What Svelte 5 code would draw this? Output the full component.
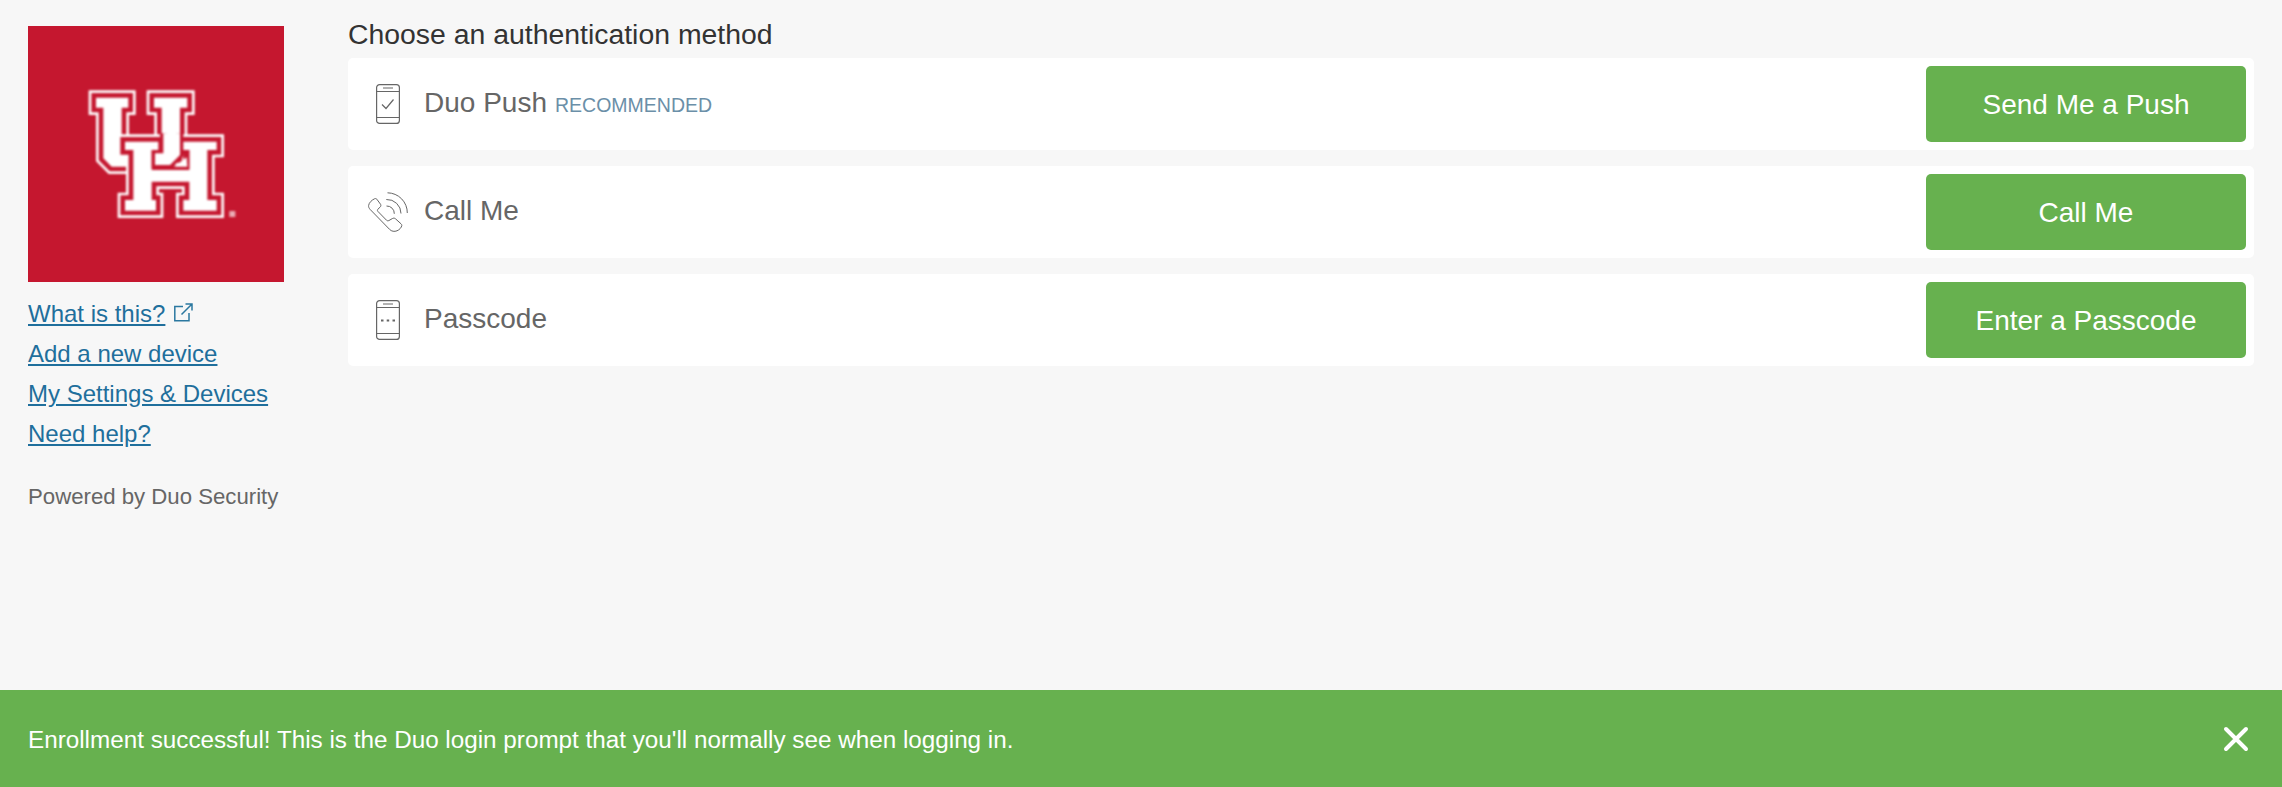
<script lang="ts">
    const methods = [
        { name: 'Duo Push', icon: 'push', note: 'RECOMMENDED', action: 'Send Me a Push' },
        { name: 'Call Me', icon: 'call', note: '', action: 'Call Me' },
        { name: 'Passcode', icon: 'code', note: '', action: 'Enter a Passcode' }
    ];

    const links = ['What is this?', 'Add a new device', 'My Settings & Devices', 'Need help?'];

    const uShape = '78,83 175,83 175,113 155,113 155,250 275,250 275,113 252,113 252,83 352,83 352,113 330,113 330,260 300,290 125,290 100,265 100,113 78,113';
    const uFront = '280,190 280,250 255,250 255,285 300,285 330,255 330,190';
    const hShape = '165,215 265,215 265,240 245,240 245,300 358,300 358,240 338,240 338,215 440,215 440,240 412,240 412,390 440,390 440,422 340,422 340,390 358,390 358,335 245,335 245,390 258,390 258,422 165,422 165,390 190,390 190,240 165,240';
</script>

<div class="page">
    <main class="main">
        <aside class="side">
            <svg class="logo" viewBox="-126 -132 768 768" aria-label="UH logo">
                <rect x="-126" y="-132" width="768" height="768" fill="#c5172f" />
                <g class="mark" stroke-linejoin="miter" paint-order="stroke">
                    <polygon points={uShape} fill="#fff" stroke="#fff" stroke-width="44" />
                    <polygon points={uShape} fill="#fff" stroke="#c5172f" stroke-width="28" />
                    <polygon points={hShape} fill="#fff" stroke="#fff" stroke-width="44" />
                    <polygon points={hShape} fill="#fff" stroke="#c5172f" stroke-width="28" />
                    <polyline points={uFront} fill="#fff" stroke="#c5172f" stroke-width="20" />
                    <rect x="340" y="240" width="18" height="58" fill="#c5172f" />
                    <polygon points="312,290 350,262 352,290" fill="#fff" />
                    <rect x="478" y="423" width="18" height="18" fill="#fff" opacity="0.65" />
                </g>
            </svg>

            <ul class="links">
                {#each links as link, i}
                    <li>
                        <a href="#top">{link}</a>
                        {#if i === 0}
                            <svg class="ext" viewBox="0 0 19 19" fill="none" stroke="currentColor" stroke-width="1.5">
                                <path d="M9 3.500H.8V17.800H15V10" />
                                <path d="M7.500 11.500L17.500 1.500M11.500 1H18V7.500" />
                            </svg>
                        {/if}
                    </li>
                {/each}
            </ul>
            <p class="powered">Powered by Duo Security</p>
        </aside>

        <section class="content">
            <h1>Choose an authentication method</h1>
            <div class="rows">
                {#each methods as m}
                    <div class="row">
                        <div class="label">
                            <span class="icon">
                                {#if m.icon === 'call'}
                                    <svg width="40" height="40" viewBox="0 0 40 40" fill="none" stroke="#666" stroke-width="1">
                                        <path d="M6.500 6.800C4 8 1 10.500 .6 13.500C.4 15 1 16 2 17.300L21.500 37.300C23.500 39.500 26.500 39.800 29 38.800C31.500 37.800 33.500 35.500 33.800 33.500C33.900 32.800 33.500 32.300 33 31.800L27.500 26.800C26.500 25.900 25.300 26 24.300 26.600L20.800 28.600C20 29 19.300 28.900 18.600 28.300L9.800 19.300C9.300 18.700 9.300 18 9.800 17.300L12.400 14.800C13 14 13 13 12.500 12.200L8.800 7.200C8.200 6.500 7.300 6.400 6.500 6.800Z" />
                                        <path d="M19.500 .8A20 20 0 0 1 39.300 21" />
                                        <path d="M18.300 7.500A14 14 0 0 1 33 21.500" />
                                        <path d="M18.500 14A7.500 7.500 0 0 1 26.300 21.800" />
                                    </svg>
                                {:else}
                                    <svg width="24" height="40" viewBox="0 0 24 40" fill="none" stroke="#666" stroke-width="1.2">
                                        <rect x=".6" y=".6" width="22.800" height="38.800" rx="3" />
                                        <path d="M.6 7.500H23.400M.6 33.500H23.400M7 4H17" />
                                        {#if m.icon === 'push'}
                                            <path d="M6 20.500L10 24.500L17.500 15.500" />
                                        {:else}
                                            <path d="M5 20.500H7.500M10.700 20.500H13.200M16.500 20.500H19" stroke-width="2" />
                                        {/if}
                                    </svg>
                                {/if}
                            </span>
                            <span class="name">{m.name}</span>
                            {#if m.note}
                                <span class="note">{m.note}</span>
                            {/if}
                        </div>
                        <button class="action">{m.action}</button>
                    </div>
                {/each}
            </div>
        </section>
    </main>

    <footer class="banner">
        <span>Enrollment successful! This is the Duo login prompt that you'll normally see when logging in.</span>
        <button class="close" aria-label="Close">
            <svg width="26" height="26" viewBox="0 0 26 26" stroke="#fff" stroke-width="4" stroke-linecap="round">
                <path d="M3 3L23 23M23 3L3 23" />
            </svg>
        </button>
    </footer>
</div>

<style>
    :global(body) {
        margin: 0;
        background: #f7f7f7;
    }

    .page {
        min-height: 787px;
        display: flex;
        flex-direction: column;
        font-family: "Liberation Sans", Arial, sans-serif;
        background: #f7f7f7;
        color: #666;
    }

    .main {
        flex: 1;
        display: flex;
        gap: 64px;
        padding: 18px 28px 0;
    }

    .side {
        width: 256px;
        flex-shrink: 0;
        padding-top: 8px;
    }

    .logo {
        display: block;
        width: 256px;
        height: 256px;
    }

    .mark {
        filter: blur(3px);
    }

    .links {
        list-style: none;
        margin: 12px 0 0;
        padding: 0;
        font-size: 24px;
        line-height: 40px;
    }

    .links a {
        color: #1f6f9c;
    }

    .ext {
        width: 19px;
        height: 19px;
        margin-left: 2px;
        color: #2b78a0;
    }

    .powered {
        margin: 28px 0 0;
        font-size: 22.200px;
        line-height: 30px;
    }

    .content {
        flex: 1;
    }

    h1 {
        margin: 0 0 8px;
        font-size: 28.400px;
        font-weight: 400;
        line-height: 32px;
        color: #333;
    }

    .rows {
        display: flex;
        flex-direction: column;
        gap: 16px;
    }

    .row {
        display: flex;
        align-items: center;
        justify-content: space-between;
        height: 92px;
        box-sizing: border-box;
        padding: 8px;
        background: #fff;
        border-radius: 5px;
    }

    .label {
        display: flex;
        align-items: center;
    }

    .icon {
        display: flex;
        justify-content: center;
        width: 40px;
        margin-left: 12px;
        margin-right: 16px;
    }

    .name {
        padding-bottom: 2px;
        font-size: 28px;
        color: #666;
    }

    .note {
        margin-left: 8px;
        padding-top: 3px;
        font-size: 19.500px;
        color: #6b8fa8;
    }

    .action {
        width: 320px;
        height: 76px;
        padding: 2px 0 0;
        border: 0;
        border-radius: 5px;
        background: #67b14f;
        color: #fff;
        font: inherit;
        font-size: 28px;
    }

    .banner {
        display: flex;
        align-items: center;
        justify-content: space-between;
        height: 97px;
        padding: 2px 33px 0 28px;
        box-sizing: border-box;
        background: #67b14f;
        color: #fff;
        font-size: 24.250px;
    }

    .close {
        display: flex;
        padding: 0;
        margin-top: -2px;
        border: 0;
        background: none;
    }
</style>
